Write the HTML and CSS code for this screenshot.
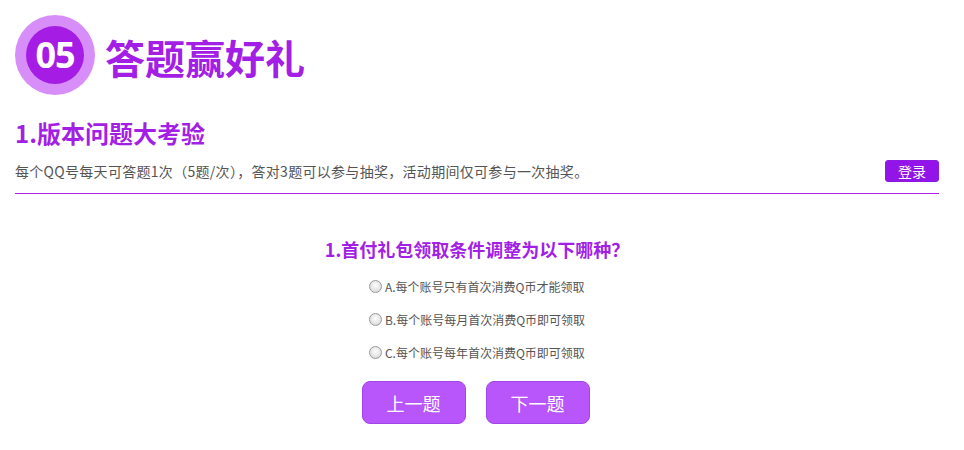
FILE: index.html
```html
<!DOCTYPE html>
<html lang="zh-CN">
<head>
    <meta charset="utf-8">
    <title>答题赢好礼</title>
    <link rel="stylesheet" href="styles.css">
</head>
<body>
    <div class="page">
        <div class="head">
            <div class="num-ring">
                <div class="num">05</div>
            </div>
            <h1 class="head-title">答题赢好礼</h1>
        </div>

        <h2 class="sub-title">1.版本问题大考验</h2>
        <div class="info-row">
            <p class="info">每个QQ号每天可答题1次（5题/次），答对3题可以参与抽奖，活动期间仅可参与一次抽奖。</p>
            <button class="login" type="button">登录</button>
        </div>

        <div class="quiz">
            <h3 class="question">1.首付礼包领取条件调整为以下哪种？</h3>
            <ul class="options">
                <li><label><input type="radio" name="q1"> A.每个账号只有首次消费Q币才能领取</label></li>
                <li><label><input type="radio" name="q1"> B.每个账号每月首次消费Q币即可领取</label></li>
                <li><label><input type="radio" name="q1"> C.每个账号每年首次消费Q币即可领取</label></li>
            </ul>
            <div class="btns">
                <button class="nav-btn" type="button">上一题</button>
                <button class="nav-btn" type="button">下一题</button>
            </div>
        </div>
    </div>
</body>
</html>
```

FILE: styles.css
```css
*{
    margin: 0;
    padding: 0;
    box-sizing: border-box;
}
body{
    background: #fff;
    font-family: "Microsoft YaHei", "Noto Sans CJK SC", sans-serif;
    color: #555;
}
.page{
    width: 964px;
    padding: 15px 25px 0 15px;
}

.head{
    display: flex;
    align-items: center;
    height: 80px;
}
.num-ring{
    width: 80px;
    height: 80px;
    border-radius: 50%;
    background: #d88ef9;
    display: flex;
    justify-content: center;
    align-items: center;
}
.num{
    width: 58px;
    height: 58px;
    border-radius: 50%;
    background: #a51ce4;
    color: #fff;
    font-family: "Open Sans", "Noto Sans CJK SC", sans-serif;
    font-weight: 700;
    font-size: 36px;
    line-height: 58px;
    text-align: center;
    letter-spacing: -1px;
}
.head-title{
    margin-left: 10px;
    font-size: 40px;
    font-weight: 700;
    color: #a31fe6;
    line-height: 1;
    margin-top: 4px;
}

.sub-title{
    margin-top: 22px;
    font-size: 24px;
    font-weight: 700;
    color: #a31fe6;
    line-height: 32px;
}
.info-row{
    display: flex;
    justify-content: space-between;
    align-items: center;
    margin-top: 11px;
    padding-bottom: 11px;
    border-bottom: 1px solid #b01ee8;
}
.info{
    font-size: 14px;
    line-height: 22px;
    letter-spacing: 0.3px;
    color: #555;
}
.login{
    width: 54px;
    height: 22px;
    border: 1px solid #8e1be0;
    border-radius: 3px;
    background: #9314e9;
    color: #fff;
    font-family: inherit;
    font-size: 14px;
    line-height: 20px;
}

.quiz{
    display: flex;
    flex-direction: column;
    align-items: center;
}
.question{
    margin-top: 42px;
    font-size: 18px;
    font-weight: 700;
    color: #a31fe6;
    line-height: 26px;
}
.options{
    list-style: none;
    margin-top: 8px;
}
.options li{
    height: 33px;
    font-size: 12px;
    line-height: 33px;
    color: #555;
}
.options label{
    display: flex;
    align-items: center;
    gap: 3px;
}
.options input{
    appearance: none;
    width: 13px;
    height: 13px;
    border-radius: 50%;
    border: 1px solid #9a9a9a;
    background: radial-gradient(circle at 50% 40%, #fdfdfd 0%, #e6e6e6 55%, #cfcfcf 100%);
    margin-top: -1px;
}
.btns{
    display: flex;
    gap: 20px;
    margin-top: 12px;
    margin-left: -3px;
}
.nav-btn{
    width: 104px;
    height: 43px;
    border: 1px solid #a045e6;
    border-radius: 8px;
    background: #b956fb;
    color: #fff;
    font-family: inherit;
    font-size: 18px;
}
```
